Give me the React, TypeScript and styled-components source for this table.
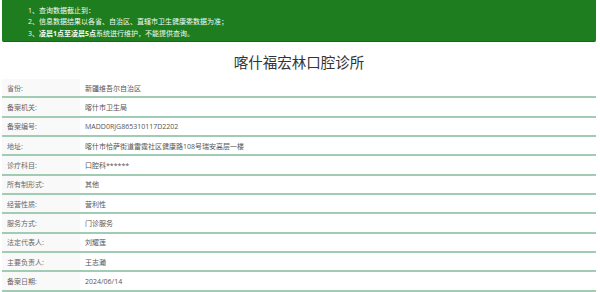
import React from 'react'
import styled, { createGlobalStyle } from 'styled-components'

const rows: { label: string; value: string }[] = [
  { label: '省份', value: '新疆维吾尔自治区' },
  { label: '备案机关', value: '喀什市卫生局' },
  { label: '备案编号', value: 'MADD0RJG865310117D2202' },
  { label: '地址', value: '喀什市恰萨街道雷霆社区健康路108号瑞安高层一楼' },
  { label: '诊疗科目', value: '口腔科******' },
  { label: '所有制形式', value: '其他' },
  { label: '经营性质', value: '营利性' },
  { label: '服务方式', value: '门诊服务' },
  { label: '法定代表人', value: '刘耀莲' },
  { label: '主要负责人', value: '王志瀚' },
  { label: '备案日期', value: '2024/06/14' },
]

const App = () => {
  return (
    <Page>
      <GlobalStyle />
      <Notice>
        <NoticeItem>1、查询数据截止到：</NoticeItem>
        <NoticeItem>2、信息数据结果以各省、自治区、直辖市卫生健康委数据为准；</NoticeItem>
        <NoticeItem>
          3、<Strong>凌晨1点至凌晨5点</Strong>系统进行维护，不能提供查询。
        </NoticeItem>
      </Notice>
      <Title>喀什福宏林口腔诊所</Title>
      <InfoTable>
        {rows.map((row) => (
          <InfoRow key={row.label}>
            <Label>{row.label}:</Label>
            <Value>{row.value}</Value>
          </InfoRow>
        ))}
      </InfoTable>
    </Page>
  )
}

const GlobalStyle = createGlobalStyle`
  html, body {
    margin: 0;
    padding: 0;
    background: #fff;
  }
  body {
    font-family: "Open Sans", "Noto Sans CJK SC", sans-serif;
  }
`

const Page = styled.div`
  width: 594px;
  margin-left: 2px;
`

const Notice = styled.div`
  height: 42px;
  box-sizing: border-box;
  padding: 4.5px 0 0 26px;
  background: #1e7d1e;
  border-bottom: 1px solid #176617;
  border-radius: 0 0 2px 2px;
`

const NoticeItem = styled.div`
  color: #f4fbf4;
  font-size: 7px;
  line-height: 11.6px;
  white-space: nowrap;
`

const Strong = styled.span`
  font-weight: bold;
`

const Title = styled.div`
  height: 37px;
  display: flex;
  align-items: center;
  justify-content: center;
  padding-top: 2px;
  box-sizing: border-box;
  font-family: "Noto Sans CJK SC", sans-serif;
  font-size: 14.5px;
  color: #333;
`

const InfoTable = styled.div`
  display: flex;
  flex-direction: column;
`

const InfoRow = styled.div`
  display: flex;
  align-items: center;
  height: 19.35px;
  box-sizing: border-box;
  border-bottom: 2px solid #a2cbb4;
`

const Label = styled.div`
  width: 78px;
  height: 100%;
  display: flex;
  align-items: center;
  box-sizing: border-box;
  padding-left: 5px;
  background: #f9f9f9;
  color: #666;
  font-size: 7px;
`

const Value = styled.div`
  padding-left: 5px;
  color: #555;
  font-size: 7px;
  white-space: nowrap;
`

export default App
